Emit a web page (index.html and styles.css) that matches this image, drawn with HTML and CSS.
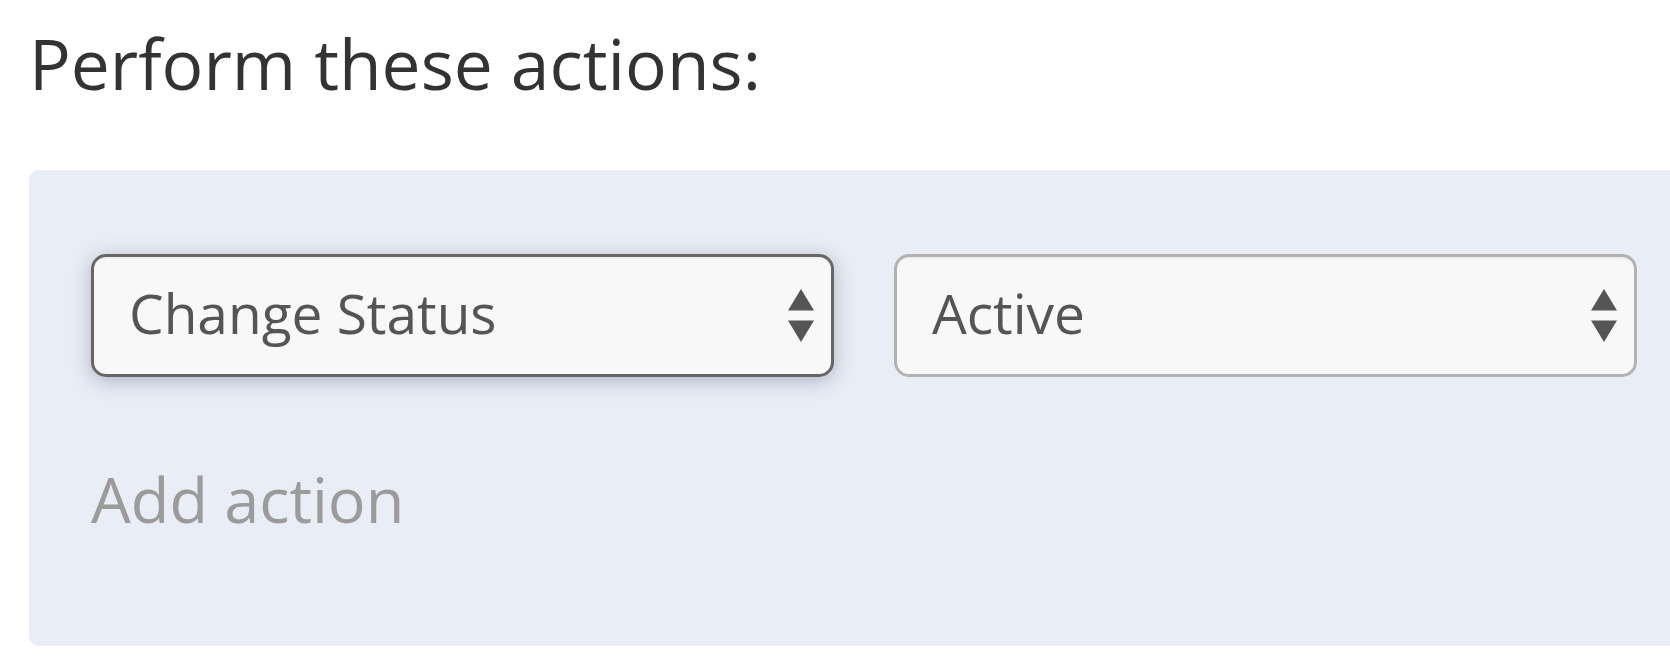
FILE: index.html
```html
<!DOCTYPE html>
<html>
<head>
<meta charset="utf-8">
<link rel="stylesheet" href="styles.css">
</head>
<body>
<div class="page">
  <h1 class="title">Perform these actions:</h1>
  <div class="panel">
    <div class="row">
      <div class="select select--focused">
        <span class="select__label">Change Status</span>
        <svg class="select__arrows" viewBox="0 0 26 53" width="26" height="53"><polygon points="13,0 26,21.5 0,21.5" fill="#555"/><polygon points="0,31.5 26,31.5 13,53" fill="#555"/></svg>
      </div>
      <div class="select">
        <span class="select__label">Active</span>
        <svg class="select__arrows" viewBox="0 0 26 53" width="26" height="53"><polygon points="13,0 26,21.5 0,21.5" fill="#555"/><polygon points="0,31.5 26,31.5 13,53" fill="#555"/></svg>
      </div>
    </div>
    <div class="add">Add action</div>
  </div>
</div>
</body>
</html>
```
FILE: styles.css
```css
html, body {
  margin: 0;
  padding: 0;
  background: #ffffff;
  overflow: hidden;
}
.page {
  padding-left: 29px;
  font-family: "Open Sans", "Lato", sans-serif;
  font-variant-ligatures: none;
}
.title {
  margin: 0;
  padding-top: 23px;
  font-size: 69.5px;
  line-height: 80px;
  font-weight: 400;
  color: #333333;
}
.panel {
  margin-top: 67px;
  width: 1700px;
  height: 476px;
  box-sizing: border-box;
  background: #e9edf6;
  border-radius: 10px;
  padding: 84px 0 0 62px;
}
.row {
  display: flex;
  gap: 60px;
}
.select {
  width: 743px;
  height: 123px;
  box-sizing: border-box;
  border: 3px solid #b2b2b2;
  border-radius: 15px;
  background: #f8f8f8;
  box-shadow: inset 0 2px 2px rgba(0, 0, 0, 0.04);
  display: flex;
  align-items: center;
  justify-content: space-between;
  padding: 0 17px 6px 35px;
}
.select--focused {
  border-color: #666666;
  box-shadow: inset 0 2px 2px rgba(0, 0, 0, 0.04), 0 4px 20px rgba(50, 60, 85, 0.32);
}
.select__label {
  font-size: 55px;
  color: #555555;
}
.select__arrows {
  margin-top: 6px;
}
.add {
  margin-top: 79px;
  font-size: 63px;
  color: #9b9b9b;
}
```
